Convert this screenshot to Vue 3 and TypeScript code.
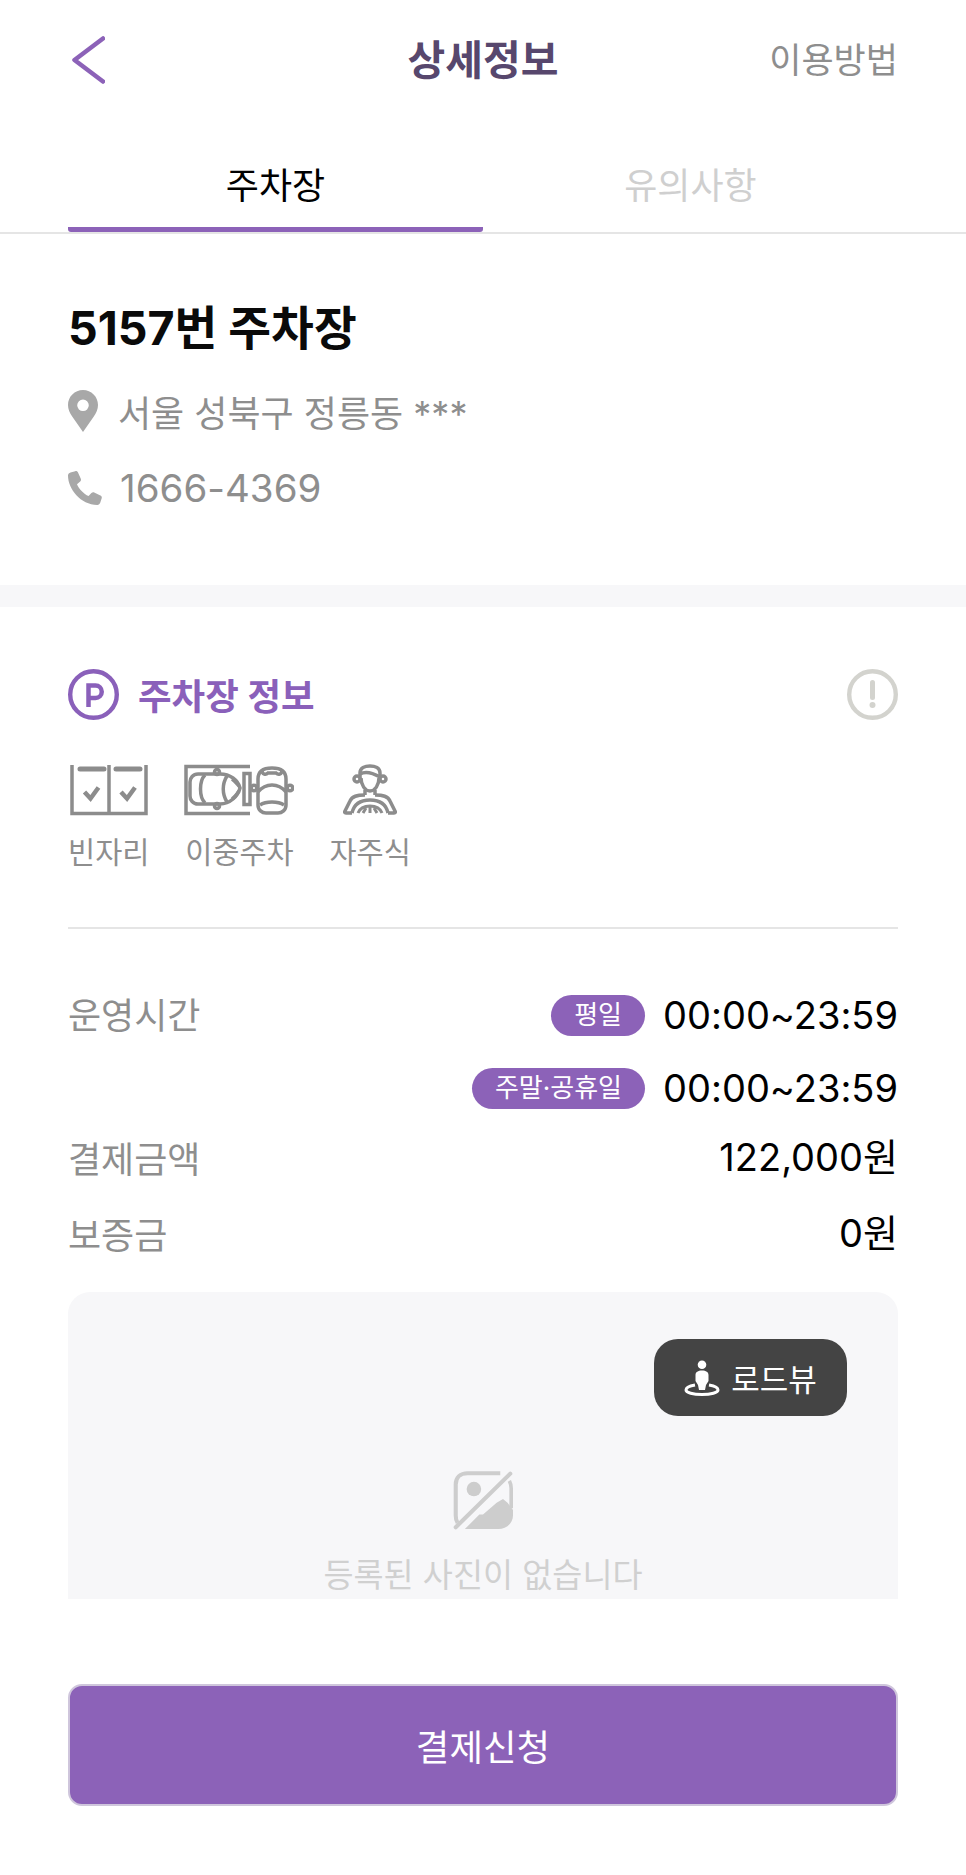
<script setup lang="ts">
interface TimeRow { tag: string; time: string }
const times: TimeRow[] = [
  { tag: '평일', time: '00:00~23:59' },
  { tag: '주말·공휴일', time: '00:00~23:59' },
]
</script>

<template>
  <div class="page">
    <header class="topbar">
      <svg class="back" width="33" height="48" viewBox="0 0 33 48" fill="none">
        <path d="M31 2.500 2.500 24 31 45.500" stroke="#8c62b8" stroke-width="4.500" stroke-linecap="round" stroke-linejoin="round" />
      </svg>
      <h1 class="title">상세정보</h1>
      <span class="howto">이용방법</span>
    </header>

    <nav class="tabs">
      <div class="tab active">주차장</div>
      <div class="tab">유의사항</div>
    </nav>

    <section class="summary">
      <h2 class="name">5157번 주차장</h2>
      <div class="contact addr">
        <svg width="30" height="42" viewBox="0 0 30 42">
          <path fill="#a8a8a8" fill-rule="evenodd" d="M15 0C6.700 0 0 6.700 0 15c0 4.200 1.700 7.800 4.200 11.500L15 42l10.800-15.500C28.300 22.800 30 19.200 30 15 30 6.700 23.300 0 15 0Zm0 9.500a5.800 5.800 0 1 1 0 11.600 5.800 5.800 0 0 1 0-11.600Z" />
        </svg>
        <span>서울 성북구 정릉동 ***</span>
      </div>
      <div class="contact phone">
        <svg width="34" height="34" viewBox="0 0 34 34">
          <path fill="#a8a8a8" d="M2.500 1.600 7.200.2c1.200-.4 2.300.2 2.800 1.300l2.800 6.300c.4 1 .2 2-.6 2.700L9 13.200c1.800 4.400 6.700 9.800 11.600 11.800l2.800-3c.8-.8 1.800-1 2.800-.6l6.200 3c1.100.5 1.700 1.700 1.300 2.800l-1.500 4.600c-.4 1.200-1.500 2.100-2.800 2.100C12.800 34 0 18 0 4.500 0 3.200 1.200 2 2.500 1.600Z" />
        </svg>
        <span>1666-4369</span>
      </div>
    </section>

    <div class="band"></div>

    <section class="info">
      <div class="info-head">
        <div class="info-title">
          <svg width="51" height="51" viewBox="0 0 51 51" fill="none">
            <circle cx="25.500" cy="25.500" r="23.300" stroke="#8a60ba" stroke-width="4.400" />
            <path d="M20.500 38V16.500h7a6.200 6.200 0 0 1 0 12.500h-7" stroke="#8a60ba" stroke-width="4.500" />
          </svg>
          <span>주차장 정보</span>
        </div>
        <svg width="51" height="51" viewBox="0 0 51 51" fill="none">
          <circle cx="25.500" cy="25.500" r="23.300" stroke="#d3d3ce" stroke-width="4.400" />
          <path d="M25.500 13.500v15" stroke="#d3d3ce" stroke-width="5" stroke-linecap="round" />
          <circle cx="25.500" cy="36" r="3" fill="#d3d3ce" />
        </svg>
      </div>

      <div class="features">
        <div class="feature">
          <svg width="78" height="52" viewBox="0 0 78 52" fill="none" stroke="#8c8c8c" stroke-width="3.500">
            <path d="M2 1v48.500h74V1M39 1v48.500" />
            <path d="M10 5h24M46 5h24" stroke-width="5" stroke-linecap="round" />
            <path d="M14.500 28l6 6.500 8-11M51 28l6 6.500 8-11" stroke-width="4.500" />
          </svg>
          <span>빈자리</span>
        </div>
        <div class="feature">
          <svg width="110" height="52" viewBox="0 0 110 52" fill="none" stroke="#8c8c8c" stroke-width="3.500">
            <path d="M66 2.500H2v47h64" />
            <path d="M14 10H36C46 10 54 16 56 24 54 32 46 40 36 40H14C9 40 6 36 6 32V18C6 14 9 10 14 10Z" />
            <path d="M21 11C15 17 15 33 21 39M43 12C38 20 38 30 43 38M48 15C51 17 53 20 55 22M48 35C51 33 53 30 55 27" />
            <circle cx="33" cy="8" r="2.500" />
            <circle cx="33" cy="42" r="2.500" />
            <rect x="60" y="9.500" width="6" height="31" />
            <path d="M74 15C74 7 80 4 88 4S102 7 102 15V41C102 46 98 49 94 49H82C78 49 74 46 74 41Z" />
            <path d="M74 28C79 22 83 21 88 21S97 22 102 28M76 41C82 37 94 37 100 41M78 6C78 11 82 11 84 9H92C94 11 98 11 98 6" />
            <circle cx="70" cy="24" r="2.800" />
            <circle cx="106" cy="24" r="2.800" />
          </svg>
          <span>이중주차</span>
        </div>
        <div class="feature">
          <svg width="54" height="52" viewBox="0 0 54 52" fill="none" stroke="#8c8c8c" stroke-width="3.500">
            <path d="M17 14V9C17 4 22 2 27 2S37 4 37 9V14" />
            <path d="M17 10C22 7 30 9 37 13" />
            <path d="M18 14C18 21 22 27 27 27S36 21 36 14" />
            <circle cx="14" cy="15" r="3" />
            <circle cx="40" cy="15" r="3" />
            <path d="M22 26V31M32 26V31" />
            <path d="M22 31C14 31 9 32 7 37L2 47Q1 49 3 49H9M32 31C40 31 45 32 47 37L52 47Q53 49 51 49H45" />
            <path d="M9 49C11 40 18 36 27 36S43 40 45 49" />
            <path d="M15 49C17 44 22 42 27 42S37 44 39 49M20 49 23 44M27 49V43M34 49 31 44" stroke-width="3" />
          </svg>
          <span>자주식</span>
        </div>
      </div>

      <hr class="rule" />

      <dl class="rows">
        <div class="row row-hours">
          <dt>운영시간</dt>
          <dd class="hours">
            <div v-for="t in times" :key="t.tag" class="hour">
              <span class="badge">{{ t.tag }}</span>
              <span class="value">{{ t.time }}</span>
            </div>
          </dd>
        </div>
        <div class="row row-pay">
          <dt>결제금액</dt>
          <dd class="value">122,000원</dd>
        </div>
        <div class="row row-dep">
          <dt>보증금</dt>
          <dd class="value">0원</dd>
        </div>
      </dl>

      <div class="photo">
        <button class="roadview" type="button">
          <svg width="36" height="36" viewBox="0 0 36 36" fill="none">
            <circle cx="18" cy="4.800" r="4.300" fill="#fff" />
            <path d="M11.500 15C11.500 12 14 10.500 18 10.500S24.500 12 24.500 15V21L22 25 21 30H15L14 25 11.500 21Z" fill="#fff" />
            <path d="M11 25C5.500 26 2 27.500 2 30 2 32.500 9 34.500 18 34.500S34 32.500 34 30C34 27.500 30.500 26 25 25" stroke="#fff" stroke-width="3" />
          </svg>
          <span>로드뷰</span>
        </button>
        <svg class="noimg" width="66" height="66" viewBox="0 0 66 66" fill="none">
          <path d="M52 3.500H16C8 3.500 3 8.500 3 16V50C3 54 3.500 56 5 58" stroke="#cdcdcd" stroke-width="4.500" />
          <path d="M62 12C63 14 64 16 64 20V42" stroke="#cdcdcd" stroke-width="4" />
          <circle cx="23" cy="21" r="8" fill="#cdcdcd" />
          <path d="M13 65 29 49 33 49 48 36 55 32 60 36 66 44V50C66 59 58 65 50 65Z" fill="#cdcdcd" />
          <path d="M3 63 63 4" stroke="#cdcdcd" stroke-width="4.500" stroke-linecap="round" />
        </svg>
        <p class="nophoto">등록된 사진이 없습니다</p>
      </div>

      <button class="submit" type="button">결제신청</button>
    </section>
  </div>
</template>

<style scoped>
.page {
  width: 966px;
  height: 1875px;
  background: #fff;
  overflow: hidden;
  font-family: "Inter", "Noto Sans CJK KR", sans-serif;
  font-feature-settings: "calt" 0;
  color: #000;
}

.topbar {
  position: relative;
  height: 121px;
  box-sizing: border-box;
  padding: 36px 68px 0 72px;
  display: flex;
  justify-content: space-between;
  align-items: flex-start;
}
.back { display: block; }
.title {
  position: absolute;
  left: 0;
  right: 0;
  top: 31px;
  margin: 0;
  text-align: center;
  font-size: 41px;
  line-height: 58px;
  font-weight: 700;
  color: #57476d;
}
.howto {
  font-size: 35px;
  line-height: 50px;
  color: #8e8e8e;
  margin-top: -1px;
}

.tabs {
  height: 113px;
  box-sizing: border-box;
  padding: 0 68px;
  display: grid;
  grid-template-columns: 415px 415px;
  border-bottom: 2px solid #e5e5e5;
}
.tab {
  text-align: center;
  font-size: 36px;
  line-height: 52px;
  padding-top: 39px;
  color: #cfcfcf;
  box-sizing: border-box;
}
.tab.active {
  color: #000;
  border-bottom: 5px solid #8c62b8;
  border-radius: 0 0 3px 3px;
}

.summary {
  height: 351px;
  box-sizing: border-box;
  padding: 62px 68px 0;
}
.name {
  margin: 0;
  font-size: 46.500px;
  line-height: 64px;
  font-weight: 700;
  color: #0a0a0a;
}
.contact {
  display: flex;
  align-items: center;
  color: #8e8e8e;
}
.addr {
  margin-top: 25px;
  height: 52px;
  gap: 20px;
  font-size: 36px;
}
.phone {
  margin-top: 25px;
  height: 52px;
  gap: 18px;
  font-size: 38.500px;
}
.band { height: 22px; background: #f7f7f9; }

.info { padding: 61px 68px 0; }
.info-head {
  display: flex;
  justify-content: space-between;
  align-items: center;
}
.info-title {
  display: flex;
  align-items: center;
  gap: 19px;
  font-size: 36.500px;
  font-weight: 700;
  color: #8a60ba;
}
.features {
  display: flex;
  gap: 35px;
  margin-top: 43px;
}
.feature {
  display: flex;
  flex-direction: column;
  align-items: center;
  font-size: 29.500px;
  line-height: 42px;
  color: #8e8e8e;
}
.feature span { margin-top: 15px; }
.rule {
  margin: 54px 0 0;
  border: 0;
  height: 2px;
  background: #e5e5e5;
}
.rows { margin: 63px 0 0; }
.row {
  display: flex;
  justify-content: space-between;
  align-items: flex-start;
  font-size: 36px;
  line-height: 52px;
}
.row dt { color: #8e8e8e; }
.row dd { margin: 0; color: #000; }
.row-hours dt { margin-top: -2px; }
.row dd.hours { margin-top: -3px; }
.hours { display: flex; flex-direction: column; gap: 21px; }
.hour {
  display: flex;
  align-items: center;
  justify-content: flex-end;
  gap: 18px;
}
.row dd.value { font-size: 38px; margin-top: -3px; }
.value { font-size: 38px; }
.badge {
  height: 41px;
  box-sizing: border-box;
  padding: 0 23px;
  border-radius: 21px;
  background: #8c62b8;
  color: #fff;
  font-size: 26px;
  line-height: 40px;
}
.row-pay { margin-top: 20px; }
.row-dep { margin-top: 24px; }

.photo {
  position: relative;
  margin-top: 30px;
  height: 307px;
  background: #f7f7f9;
  border-radius: 22px 22px 0 0;
  overflow: hidden;
  display: flex;
  flex-direction: column;
  align-items: center;
  box-sizing: border-box;
  padding-top: 178px;
}
.roadview {
  position: absolute;
  top: 47px;
  right: 51px;
  width: 193px;
  height: 77px;
  border: 0;
  border-radius: 24px;
  background: #444;
  color: #fff;
  font-family: inherit;
  font-size: 31px;
  display: flex;
  align-items: center;
  justify-content: center;
  gap: 11px;
  padding: 0;
}
.noimg { display: block; }
.nophoto {
  margin: 21px 0 0;
  font-size: 32.700px;
  line-height: 48px;
  color: #d0d0d0;
}
.submit {
  display: block;
  width: 100%;
  height: 122px;
  margin-top: 85px;
  border: 2px solid #cfc6dc;
  border-radius: 14px;
  background: #8c62b8;
  color: #fff;
  font-family: inherit;
  font-size: 36.500px;
}
</style>
